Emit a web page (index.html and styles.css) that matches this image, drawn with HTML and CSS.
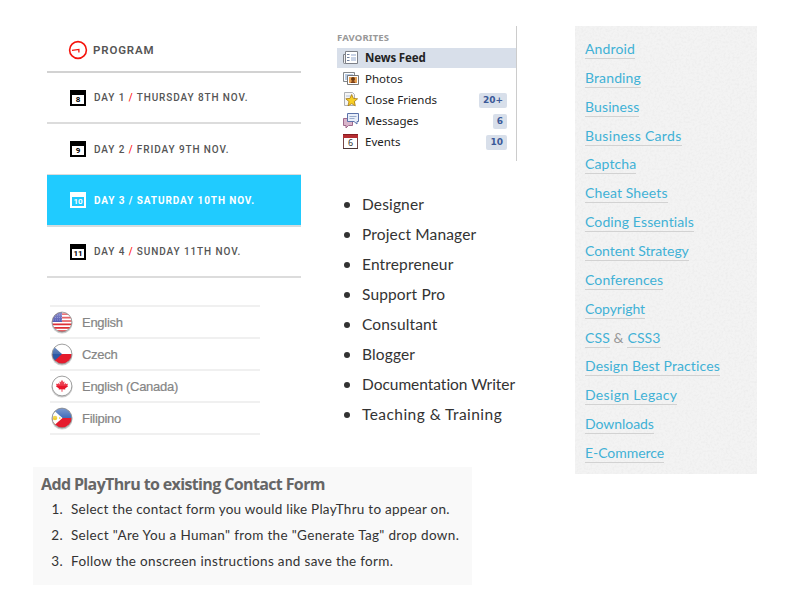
FILE: index.html
```html
<!DOCTYPE html>
<html lang="en">
<head>
<meta charset="utf-8">
<title>Lists</title>
<link rel="stylesheet" href="styles.css">
</head>
<body>
<main class="page">
  <div class="primary">
    <div class="top">
      <div class="left">
        <section class="program">
          <div class="program-head">
            <svg width="20" height="20" viewBox="0 0 20 20" fill="none" stroke="#f5140c"><circle cx="10" cy="10" r="8.4" stroke-width="1.6"/><path d="M4 10.4 10.900 9.400v3.200" stroke-width="1.3"/></svg>
            <h2>PROGRAM</h2>
          </div>
          <ul class="days">
            <li><span class="cal">8</span><span class="day">DAY 1 <i>/</i> THURSDAY 8TH NOV.</span></li>
            <li><span class="cal">9</span><span class="day">DAY 2 <i>/</i> FRIDAY 9TH NOV.</span></li>
            <li class="active"><span class="cal">10</span><span class="day">DAY 3 <i>/</i> SATURDAY 10TH NOV.</span></li>
            <li><span class="cal">11</span><span class="day">DAY 4 <i>/</i> SUNDAY 11TH NOV.</span></li>
          </ul>
        </section>
        <svg class="defs" width="0" height="0">
          <defs>
            <clipPath id="disc"><circle cx="12" cy="11" r="9.7"/></clipPath>
            <linearGradient id="gloss" x1="0" y1="0" x2="0" y2="1"><stop offset="0" stop-color="#fff" stop-opacity=".4"/><stop offset=".5" stop-color="#fff" stop-opacity=".12"/><stop offset=".52" stop-color="#fff" stop-opacity="0"/></linearGradient>
            <g id="rim"><circle cx="12" cy="11" r="9.7" fill="url(#gloss)"/><circle cx="12" cy="11" r="9.9" fill="none" stroke="#777" stroke-opacity=".7"/></g>
            <g id="shade"><ellipse cx="12" cy="12.2" rx="10.5" ry="10.4" fill="#999" opacity=".5"/><circle cx="12" cy="11" r="10.1" fill="#fff"/></g>
          </defs>
        </svg>
        <ul class="langs">
          <li>
            <svg width="24" height="24"><use href="#shade"/><g clip-path="url(#disc)"><path d="M2 3.2h20M2 6.6h20M2 10h20M2 13.4h20M2 16.8h20M2 20.2h20" stroke="#dd2f35" stroke-width="1.7"/><path fill="#3d44a8" d="M1 0h11v11H1z"/><path d="M3 4h9M3 6.5h9M3 9h9" stroke="#8d92d4" stroke-width=".7" stroke-dasharray="1 1"/></g><use href="#rim"/></svg>
            <span>English</span></li>
          <li>
            <svg width="24" height="24"><use href="#shade"/><g clip-path="url(#disc)"><path fill="#e51b2d" d="M2 11h20v10H2z"/><path fill="#2c59a5" d="M2 2 12 11 2 20z"/></g><use href="#rim"/></svg>
            <span>Czech</span></li>
          <li>
            <svg width="24" height="24"><use href="#shade"/><path fill="#e8152a" d="m12 4.8 1.3 2.3 1.3-.6-.5 3 1.6-1.5.5 1 1.8-.3-.6 2 .7.6-3 2.3.2 1-2.9-.3v2.400h-.8v-2.400l-2.900.3.2-1-3-2.300.7-.6-.6-2 1.800.3.5-1 1.600 1.500-.5-3 1.300.6z"/><use href="#rim"/></svg>
            <span>English (Canada)</span></li>
          <li>
            <svg width="24" height="24"><use href="#shade"/><g clip-path="url(#disc)"><path fill="#2758b0" d="M2 1h20v10H2z"/><path fill="#e51b2d" d="M2 11h20v10H2z"/><path fill="#fff" d="M1 1 12.5 11 1 21z"/><circle cx="5" cy="11" r="2.3" fill="#f0ce35"/><path fill="#f0ce35" d="M3 4h1.5v2H3zM3 16h1.5v2H3zM9 10.3h1.5v1.4H9z"/></g><use href="#rim"/></svg>
            <span>Filipino</span></li>
        </ul>
      </div>
      <div class="middle">
        <nav class="favs">
          <h3>FAVORITES</h3>
          <ul>
            <li class="on"><svg width="18" height="18"><path d="M3.5 2.5h12v12h-12z" fill="#fff" stroke="#7d8088"/><path d="M1.5 5.5h2v9h-1q-1 0-1-1z" fill="#eee" stroke="#7d8088"/><path d="M5 5.5h2.500M5 8.500h2.500M5 11.500h2.500" stroke="#71819f"/><path d="M9 5h5v2H9zM9 8h5v4H9z" fill="#c9d3e6"/></svg><b>News Feed</b></li>
            <li><svg width="18" height="18"><path d="M1.500 2.500h11v9h-11z" fill="#b9cce5" stroke="#85888c"/><path d="M2.500 3.500h9v7h-9z" fill="none" stroke="#fff"/><path d="M5.500 5.500h11v9h-11z" fill="#fff" stroke="#777"/><path d="M7 7h8v6H7z" fill="#e7a256"/><circle cx="11" cy="9" r="2" fill="#69360f"/><path d="M8.500 13q.5-2 2.500-2t2.500 2z" fill="#7c3e15"/></svg><span>Photos</span></li>
            <li><svg width="18" height="18"><path d="M2.500 1.500h8l2 2v11h-10z" fill="#f5f5f5" stroke="#aeb0b4"/><path d="M4 5h5M4 8h3" stroke="#b6c4d9"/><path d="m9.700 3.500 1.700 3.900 4.200.4-3.200 2.800.9 4.200-3.600-2.200L6 14.800l1-4.200-3.200-2.800 4.200-.4z" fill="#f7cf24" stroke="#a87911" stroke-width=".8"/></svg><span>Close Friends</span><em>20+</em></li>
            <li><svg width="18" height="18"><path d="M1.500 6.500h9v7h-4L4 16v-2.500H1.500z" fill="#d9b5cb" stroke="#9f6a8c"/><path d="M5.500 1.500h11v8H15v2.500l-3-2.500H5.500z" fill="#e8eef9" stroke="#5b72aa"/><path d="M7.500 4.500h7M7.500 6.500h5" stroke="#9aaccc"/></svg><span>Messages</span><em>6</em></li>
            <li><svg width="18" height="18"><path d="M1.500 2.500h14v13h-14z" fill="#fff" stroke="#754747"/><path d="M1 1h15v4H1z" fill="#b52d32"/><path d="M1 1.500h15" stroke="#871d22"/><path d="M1 15.500h15" stroke="#4b3535"/><text x="8.500" y="13" class="date">6</text></svg><span>Events</span><em>10</em></li>
          </ul>
        </nav>
        <ul class="roles">
          <li>Designer</li><li>Project Manager</li><li>Entrepreneur</li><li>Support Pro</li>
          <li>Consultant</li><li>Blogger</li><li class="snug">Documentation Writer</li><li class="wide">Teaching &amp; Training</li>
        </ul>
      </div>
    </div>
    <section class="steps">
      <h2>Add PlayThru to existing Contact Form</h2>
      <ol>
        <li class="snug">Select the contact form you would like PlayThru to appear on.</li>
        <li>Select "Are You a Human" from the "Generate Tag" drop down.</li>
        <li>Follow the onscreen instructions and save the form.</li>
      </ol>
    </section>
  </div>
  <aside class="topics">
    <svg class="grain" width="182" height="448"><filter id="n"><feTurbulence type="fractalNoise" baseFrequency=".45" numOctaves="2"/><feColorMatrix values="0 0 0 0 .45  0 0 0 0 .45  0 0 0 0 .45  .22 0 0 0 -.09"/></filter><rect width="182" height="448" filter="url(#n)"/></svg>
    <ul>
      <li><a>Android</a></li><li><a>Branding</a></li><li><a>Business</a></li><li class="wide"><a>Business Cards</a></li>
      <li><a>Captcha</a></li><li><a>Cheat Sheets</a></li><li><a>Coding Essentials</a></li><li class="snug"><a>Content Strategy</a></li>
      <li><a>Conferences</a></li><li class="snug"><a>Copyright</a></li><li><a>CSS</a> &amp; <a>CSS3</a></li><li><a>Design Best Practices</a></li>
      <li class="wide"><a>Design Legacy</a></li><li class="snug"><a>Downloads</a></li><li class="snug"><a>E-Commerce</a></li>
    </ul>
  </aside>
</main>
</body>
</html>
```
FILE: styles.css
```css
* { box-sizing: border-box; margin: 0; padding: 0; }
body { background: #fff; width: 800px; height: 600px; overflow: hidden; }
ul, ol { list-style: none; }
svg { flex: none; display: block; }
.page { display: flex; align-items: flex-start; gap: 58px; padding: 26px 0 0 33px; }
.primary { width: 484px; }
.top { display: flex; height: 441px; padding-left: 14px; gap: 36px; }
.left { width: 254px; }
.defs { position: absolute; }

.program { font-family: Roboto, sans-serif; color: #555; }
.program-head { display: flex; align-items: center; height: 47px; padding: 3px 0 0 21px; gap: 5px; border-bottom: 2px solid #d2d2d2; }
.program-head h2 { font-size: 11.5px; font-weight: 600; letter-spacing: .85px; }
.days li { display: flex; align-items: center; height: 51px; padding-left: 23px; gap: 8px; border-bottom: 2px solid #dcdcdc; }
.days li.active { height: 52px; margin-top: -1px; border-bottom-color: #d5dcde; background: #20cbff; background-clip: padding-box; color: #fff; }
.days li:nth-child(2) { height: 52px; }
.day { font-size: 10px; font-weight: 500; letter-spacing: .9px; white-space: nowrap; }
.active .day { font-weight: 700; }
.day i { color: #f22; font-style: normal; }
.active i { color: inherit; }
.cal { width: 16px; height: 16px; border: 2px solid #000; border-top-width: 5px; font: 700 8px/9px Roboto, sans-serif; color: #000; text-align: center; }
.active .cal { border-color: #fff; color: #fff; }

.langs { width: 210px; margin: 27px 0 0 3px; border-top: 2px solid #f0f0f0; font: 13px "Liberation Sans", sans-serif; letter-spacing: -.28px; color: #858585; }
.langs li { display: flex; align-items: center; height: 32px; gap: 8px; border-bottom: 2px solid #f0f0f0; }
.langs svg { margin-top: 2px; }
.langs span { -webkit-text-stroke: .2px #858585; }

.middle { width: 180px; }
.favs { height: 135px; border-right: 1px solid #ccc; font: 11.5px "Noto Sans", sans-serif; color: #222; }
.favs h3 { height: 22px; font-size: 9.5px; line-height: 23px; letter-spacing: .15px; color: #999; }
.favs li { display: flex; align-items: center; height: 20px; margin-bottom: 1px; padding: 0 9px 0 5px; gap: 5px; }
.favs b, .favs span { margin-top: -2px; }
.favs b { letter-spacing: -.15px; }
.favs .on { background: #d8dfea; }
.favs em { margin-left: auto; height: 15px; padding: 0 4px; border-radius: 2px; background: #d8dfea; color: #3b5998; font: 700 9px/15px "DejaVu Sans", sans-serif; }
.date { font: 9px "Noto Sans", sans-serif; text-anchor: middle; fill: #333; }

.roles { margin-top: 28px; font: 15.5px/30px Lato, sans-serif; letter-spacing: .15px; color: #333; }
.roles li { display: flex; align-items: center; height: 30px; padding-left: 7px; gap: 12px; white-space: nowrap; }
.roles li::before { content: ""; width: 6px; height: 6px; margin-top: 2px; border-radius: 50%; background: #333; flex: none; }
.roles .snug { letter-spacing: -.03px; }
.roles .wide { letter-spacing: .45px; }

.steps { width: 439px; height: 118px; padding: 6px 8px; background: #f9f9f9; }
.steps h2 { font: 700 16px/23px "Open Sans", sans-serif; color: #666; letter-spacing: -.63px; white-space: nowrap; }
.steps ol { counter-reset: n; font: 13.5px/26px Lato, sans-serif; letter-spacing: .34px; color: #333; }
.steps li { display: flex; gap: 8px; counter-increment: n; white-space: nowrap; }
.steps .snug { letter-spacing: .26px; }
.steps li::before { content: counter(n) "."; width: 22px; text-align: right; }

.topics { position: relative; width: 182px; height: 448px; padding: 9px 10px; background: #f3f3f3; }
.grain { position: absolute; inset: 0; }
.topics ul { position: relative; font: 14px/28.86px Lato, sans-serif; letter-spacing: .12px; color: #999; }
.topics li { height: 28.86px; white-space: nowrap; }
.topics .snug { letter-spacing: -.05px; }
.topics .wide { letter-spacing: .32px; }
.topics a { color: #41b1d6; border-bottom: 1px solid #d2d2d2; padding-bottom: 1px; }
```
